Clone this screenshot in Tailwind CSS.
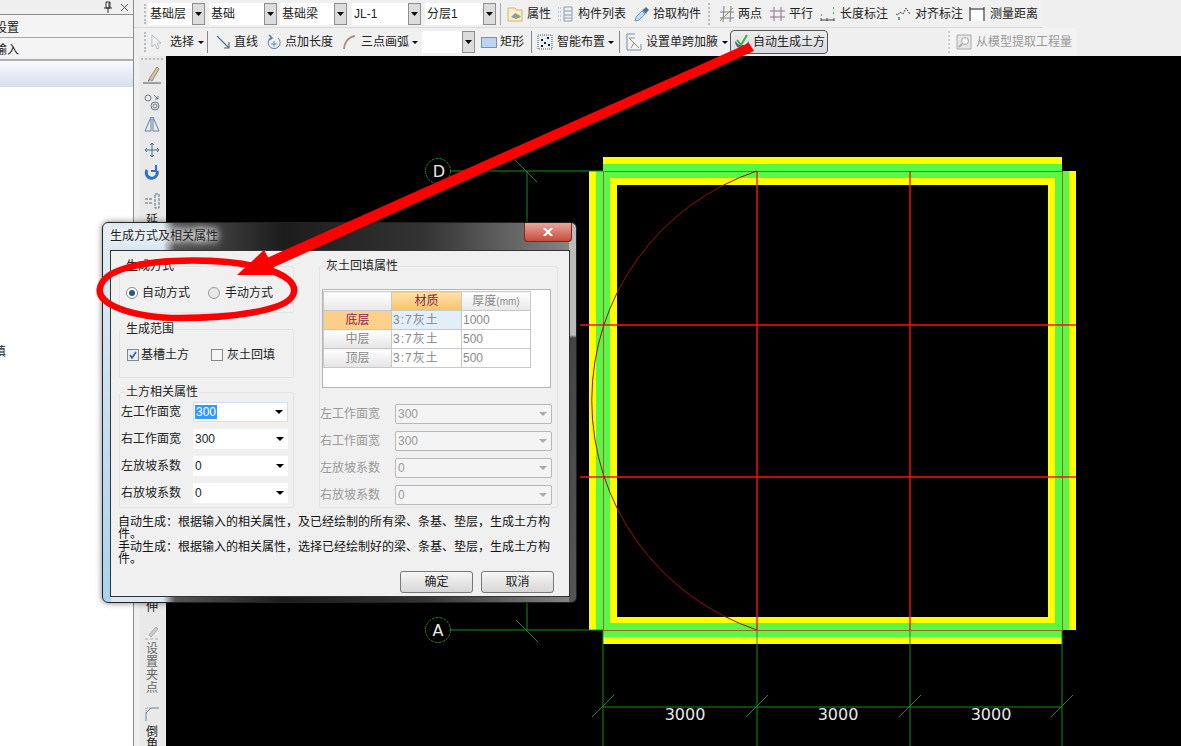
<!DOCTYPE html>
<html lang="zh-CN">
<head>
  <meta charset="UTF-8">
  <title>自动生成土方</title>
  <script src="https://cdn.jsdelivr.net/npm/@tailwindcss/browser@4"></script>
</head>
<body class="bg-[#efefef]">
<div class="relative flex w-[1181px] h-[746px] overflow-hidden bg-[#efefef] text-[12px] leading-[16px] text-[#222] font-['Liberation_Sans','Noto_Sans_CJK_SC',sans-serif]">

  <!-- left panel -->
  <aside class="flex flex-col w-[134px] h-full shrink-0 bg-white border-r border-[#8c8c8c]">
    <div class="flex items-center h-[15px] bg-[#efefef] border-b border-[#8c8c8c]">
      <svg class="ml-[103px] w-[10px] h-[12px]" viewBox="0 0 10 12" fill="none" stroke="#333"><path d="M3 1h4v6H3zM1 7h8M5 7v5M6 1v6"/></svg>
      <svg class="ml-[7px] w-[9px] h-[9px]" viewBox="0 0 9 9" fill="none" stroke="#555"><path d="M1 1l7 7M8 1L1 8"/></svg>
    </div>
    <div class="flex items-center h-[23px] pt-[3px] bg-[#f4f4f4] border-b border-[#a8a8a8]"><span class="-ml-[5px]">设置</span></div>
    <div class="flex items-center h-[23px] pt-[2px] bg-[#f4f4f4] border-b-2 border-[#b0b0b0]"><span class="-ml-[5px]">输入</span></div>
    <div class="h-[26px] bg-gradient-to-b from-[#fafbfd] to-[#d5deeb]"></div>
    <div class="mt-[257px] -ml-[6px]">填</div>
  </aside>

  <main class="flex flex-col flex-1 min-w-0">
    <!-- toolbars -->
    <div class="h-[56px] shrink-0">
      <div class="flex items-center w-[909px] h-[28px] pl-[6px] border-b border-[#dadada]">
        <div class="flex items-center w-[903px] h-full bg-[#f0f0f0]">
          <span class="ml-[4px] w-[2px] h-[20px] border-l-2 border-dotted border-[#bbb]"></span>
          <div class="flex ml-[2px] w-[57px] h-[22px] bg-white"><span class="flex-1 pl-[2px] leading-[22px]">基础层</span><span class="flex items-center justify-center w-[13px] border border-[#8e8e8e] bg-[#dcdcdc]"><svg class="w-[7px] h-[4px]" viewBox="0 0 7 4"><path d="M0 0h7L3.5 4z"/></svg></span></div>
          <div class="flex ml-[4px] w-[68px] h-[22px] bg-white"><span class="flex-1 pl-[2px] leading-[22px]">基础</span><span class="flex items-center justify-center w-[13px] border border-[#8e8e8e] bg-[#dcdcdc]"><svg class="w-[7px] h-[4px]" viewBox="0 0 7 4"><path d="M0 0h7L3.5 4z"/></svg></span></div>
          <div class="flex ml-[3px] w-[67px] h-[22px] bg-white"><span class="flex-1 pl-[2px] leading-[22px]">基础梁</span><span class="flex items-center justify-center w-[13px] border border-[#8e8e8e] bg-[#dcdcdc]"><svg class="w-[7px] h-[4px]" viewBox="0 0 7 4"><path d="M0 0h7L3.5 4z"/></svg></span></div>
          <div class="flex ml-[5px] w-[69px] h-[22px] bg-white"><span class="flex-1 pl-[2px] leading-[22px]">JL-1</span><span class="flex items-center justify-center w-[13px] border border-[#8e8e8e] bg-[#dcdcdc]"><svg class="w-[7px] h-[4px]" viewBox="0 0 7 4"><path d="M0 0h7L3.5 4z"/></svg></span></div>
          <div class="flex ml-[4px] w-[71px] h-[22px] bg-white"><span class="flex-1 pl-[2px] leading-[22px]">分层1</span><span class="flex items-center justify-center w-[13px] border border-[#8e8e8e] bg-[#dcdcdc]"><svg class="w-[7px] h-[4px]" viewBox="0 0 7 4"><path d="M0 0h7L3.5 4z"/></svg></span></div>
          <span class="ml-[4px] w-px h-[22px] bg-[#aaa]"></span>
          <svg class="ml-[6px] w-4 h-4 shrink-0" viewBox="0 0 16 16"><path d="M1 2h7l1 2h6v11H1z" fill="#fbeecb" stroke="#d9b26a"/><path d="M4 11l4-4 4 2 2 2-5 2z" fill="#8fa08a"/></svg>
          <span class="ml-[4px] whitespace-nowrap">属性</span>
          <svg class="ml-[6px] w-4 h-4 shrink-0" viewBox="0 0 16 16" fill="none" stroke="#8aa0b8"><path d="M1 2h3M1 6h3M1 10h3M1 14h3" stroke-dasharray="1 1"/><path d="M7 1h8v14H7zM7 5h8M7 9h8M7 12h8" /></svg>
          <span class="ml-[5px] whitespace-nowrap">构件列表</span>
          <svg class="ml-[8px] w-4 h-4 shrink-0" viewBox="0 0 16 16"><path d="M1 15l1-4 6-6 3 3-6 6z" fill="#c4dcf2" stroke="#6d94bd"/><path d="M8 4l2-1 2-2 3 3-2 2-1 2z" fill="#4f6f92"/></svg>
          <span class="ml-[3px] whitespace-nowrap">拾取构件</span>
          <span class="ml-[7px] w-[2px] h-[22px] border-l-2 border-dotted border-[#bbb]"></span>
          <svg class="ml-[9px] w-[15px] h-4 shrink-0" viewBox="0 0 15 16" fill="none" stroke="#7d7f8c"><path d="M1 6h14M1 12h14M5 0l-1 16M12 0l-1 16"/><path d="M1 15L14 2" stroke="#9a9a50"/></svg>
          <span class="ml-[4px] whitespace-nowrap">两点</span>
          <svg class="ml-[8px] w-[15px] h-4 shrink-0" viewBox="0 0 15 16" fill="none" stroke="#8a7390"><path d="M0 5h15M0 11h15M4 1v14M11 1v14"/></svg>
          <span class="ml-[4px] whitespace-nowrap">平行</span>
          <svg class="ml-[7px] w-[15px] h-4 shrink-0" viewBox="0 0 15 16" fill="none" stroke="#444"><path d="M1 12v3M7 12v3M14 12v3M1 14h13" /><path d="M1 9h2M13 2h2M13 7h2" stroke="#6aa06a" stroke-width="2" stroke-dasharray="1 1"/></svg>
          <span class="ml-[5px] whitespace-nowrap">长度标注</span>
          <svg class="ml-[7px] w-4 h-4 shrink-0" viewBox="0 0 16 16" fill="none" stroke="#444"><path d="M1 8l2 1 2-3 3 2 3-6 4 6" stroke-dasharray="2 1"/><path d="M4 11v3" stroke="#6aa06a" stroke-width="2"/></svg>
          <span class="ml-[4px] whitespace-nowrap">对齐标注</span>
          <svg class="ml-[6px] w-4 h-4 shrink-0" viewBox="0 0 16 16" fill="none"><path d="M2 4h12v11H2z" fill="#fff"/><path d="M1 1v14M15 1v14M1 3h14" stroke="#222"/></svg>
          <span class="ml-[5px] whitespace-nowrap">测量距离</span>
        </div>
      </div>

      <div class="flex items-center h-[28px] pl-[6px]">
        <div class="flex items-center w-[690px] h-full bg-[#f0f0f0]">
          <span class="ml-[4px] w-[2px] h-[20px] border-l-2 border-dotted border-[#bbb]"></span>
          <svg class="ml-[4px] w-3 h-4 shrink-0" viewBox="0 0 12 16"><path d="M2 1v12l3-3 2 5 2-1-2-5h4z" fill="#fff" stroke="#aeb6bf"/></svg>
          <span class="ml-[8px] whitespace-nowrap">选择</span>
          <svg class="ml-[4px] w-[6px] h-[3px] shrink-0" viewBox="0 0 6 3"><path d="M0 0h6L3 3z"/></svg>
          <span class="ml-[3px] w-px h-[22px] bg-[#888]"></span>
          <svg class="ml-[8px] w-[14px] h-[14px] shrink-0" viewBox="0 0 14 14" fill="none" stroke="#55708c" stroke-width="1.2"><path d="M1 1l12 12M13 7v6H8"/></svg>
          <span class="ml-[4px] whitespace-nowrap">直线</span>
          <svg class="ml-[8px] w-4 h-4 shrink-0" viewBox="0 0 16 16" fill="none" stroke="#5f7fa8"><path d="M6 3a6 6 0 1 0 6 1"/><path d="M8 7v6M5 10h6"/><path d="M3 1l3 3-3 2" stroke-width="1.6"/></svg>
          <span class="ml-[3px] whitespace-nowrap">点加长度</span>
          <svg class="ml-[9px] w-[14px] h-4 shrink-0" viewBox="0 0 14 16" fill="none" stroke="#a89088" stroke-width="1.8"><path d="M2 15C2 9 6 3 13 2"/></svg>
          <span class="ml-[5px] whitespace-nowrap">三点画弧</span>
          <svg class="ml-[3px] w-[6px] h-[3px] shrink-0" viewBox="0 0 6 3"><path d="M0 0h6L3 3z"/></svg>
          <div class="flex ml-[4px] w-[53px] h-[22px] bg-white"><span class="flex-1"></span><span class="flex items-center justify-center w-[13px] border border-[#8e8e8e] bg-[#dcdcdc]"><svg class="w-[7px] h-[4px]" viewBox="0 0 7 4"><path d="M0 0h7L3.5 4z"/></svg></span></div>
          <span class="ml-[6px] w-4 h-[11px] shrink-0 bg-[#bcd3f2] border border-[#6f93c4]"></span>
          <span class="ml-[3px] whitespace-nowrap">矩形</span>
          <span class="ml-[7px] w-px h-[22px] bg-[#888]"></span>
          <svg class="ml-[5px] w-4 h-4 shrink-0" viewBox="0 0 16 16" fill="none" stroke="#555"><path d="M1 1h14v14H1z" stroke-dasharray="1 1" fill="#e6eef6"/><path d="M4 6h2M10 4h2M7 9h2M4 12h2M11 11h2" stroke="#222" stroke-width="2"/></svg>
          <span class="ml-[4px] whitespace-nowrap">智能布置</span>
          <svg class="ml-[3px] w-[6px] h-[3px] shrink-0" viewBox="0 0 6 3"><path d="M0 0h6L3 3z"/></svg>
          <span class="ml-[5px] w-px h-[22px] bg-[#888]"></span>
          <svg class="ml-[6px] w-4 h-[18px] shrink-0" viewBox="0 0 16 18" fill="none" stroke="#6f8fb0"><path d="M9 1H1v16h14v-6" fill="#eef4fa"/><path d="M3 5l10 10M3 5h6M8 10l-3 5" stroke="#a98a60"/></svg>
          <span class="ml-[4px] whitespace-nowrap">设置单跨加腋</span>
          <svg class="ml-[4px] w-[6px] h-[3px] shrink-0" viewBox="0 0 6 3"><path d="M0 0h6L3 3z"/></svg>
          <div class="flex items-center ml-[2px] w-[98px] h-[24px] rounded-[4px] border border-[#555] bg-gradient-to-b from-[#ececec] to-[#d9dbe0]">
            <svg class="ml-[4px] w-[14px] h-4 shrink-0" viewBox="0 0 14 16" fill="none"><path d="M0 7c0 10 14 10 14 0l-4 4H4z" fill="#5c5f8e"/><path d="M2 6l4 5 6-10" stroke="#3fb035" stroke-width="2"/></svg>
            <span class="ml-[4px] whitespace-nowrap">自动生成土方</span>
          </div>
        </div>
        <div class="flex items-center ml-[117px] w-[130px] h-full bg-[#f3f3f3] text-[#999]">
          <span class="ml-[1px] w-[2px] h-[22px] border-l-2 border-dotted border-[#ccc]"></span>
          <svg class="ml-[6px] w-4 h-4 shrink-0" viewBox="0 0 16 16" fill="none" stroke="#aaa"><path d="M1 1h14v14H1z" fill="#e6e6e6"/><circle cx="9" cy="7" r="3.5" fill="#f4f4f4"/><path d="M6 10l-3 3" stroke-width="2"/></svg>
          <span class="ml-[4px] whitespace-nowrap">从模型提取工程量</span>
        </div>
      </div>
    </div>

    <div class="flex flex-1 min-h-0">
      <!-- vertical toolbar -->
      <div class="flex flex-col items-center w-[26px] ml-[5px] shrink-0 bg-[#e9e9e9] text-center">
        <span class="mt-[2px] w-[22px] border-t-2 border-dotted border-[#bbb]"></span>
        <svg class="mt-[5px] w-5 h-5 shrink-0" viewBox="0 0 20 20" fill="none"><path d="M7 14l8-12 2 2-7 12z" fill="#d8c690" stroke="#8a8a8a"/><path d="M6 15l3-1-3 3z" fill="#777"/><path d="M1 18h18" stroke="#555"/></svg>
        <span class="mt-[4px] w-[20px] h-px bg-[#999]"></span>
        <svg class="mt-[4px] w-4 h-[18px] shrink-0" viewBox="0 0 16 18" fill="none" stroke="#6a7a88"><circle cx="4" cy="5" r="3"/><circle cx="11" cy="13" r="4"/><circle cx="11" cy="13" r="2"/><path d="M10 2l4 4M14 3v3h-3"/></svg>
        <svg class="mt-[5px] w-4 h-4 shrink-0" viewBox="0 0 16 16" fill="none" stroke="#6283b0"><path d="M7 1v14H1zM9 1v14h6z"/></svg>
        <span class="mt-[4px] w-[20px] h-px bg-[#999]"></span>
        <svg class="mt-[6px] w-4 h-4 shrink-0" viewBox="0 0 16 16" fill="none" stroke="#3f6f8a"><path d="M8 1v14M1 8h14M6 3l2-2 2 2M6 13l2 2 2-2M3 6L1 8l2 2M13 6l2 2-2 2"/></svg>
        <svg class="mt-[6px] w-4 h-4 shrink-0" viewBox="0 0 16 16" fill="none" stroke="#2f73c0" stroke-width="3"><path d="M3 6a5.5 5.5 0 1 0 10 1"/><path d="M12 1v6H7" stroke-width="2"/></svg>
        <span class="mt-[7px] w-[20px] h-px bg-[#999]"></span>
        <svg class="mt-[6px] w-4 h-4 shrink-0" viewBox="0 0 16 16" fill="none" stroke="#55708c"><path d="M11 1h4v14h-4zM1 6h8M1 10h8" stroke-dasharray="3 1"/></svg>
        <span class="mt-[5px] leading-[12px]">延</span>
        <span class="mt-[375px] leading-[12px]">伸</span>
        <span class="mt-[7px] w-[20px] h-px bg-[#999]"></span>
        <svg class="mt-[5px] w-4 h-4 shrink-0" viewBox="0 0 16 16" fill="none" stroke="#aaa"><path d="M5 10l7-8 2 2-7 8z" fill="#ccc"/><path d="M1 14h14" stroke-dasharray="3 2"/></svg>
        <span class="mt-[2px] leading-[13px] text-[#666]">设<br>置<br>夹<br>点</span>
        <span class="mt-[5px] w-[20px] h-px bg-[#999]"></span>
        <svg class="mt-[6px] w-4 h-4 shrink-0" viewBox="0 0 16 16" fill="none" stroke="#6283b0"><path d="M2 15V7l5-5h8"/><path d="M2 7V2h5" stroke-dasharray="1 1" stroke="#888"/></svg>
        <span class="mt-[4px] leading-[12px]">倒<br>角</span>
      </div>

      <!-- drawing canvas -->
      <div class="relative flex-1 bg-black ml-px">
        <svg class="absolute left-0 top-0" width="1015" height="690" viewBox="166 56 1015 690" fill="none">
          <path d="M603 157h459v14h14v459h-14v14H603v-14h-14V171h14z" fill="#ffff00"/>
          <path d="M603 164h459v7h7v459h-7v7H603v-7h-7V171h7z" fill="#58f848"/>
          <rect x="610" y="178" width="445" height="445" fill="#ffff00"/>
          <rect x="617" y="185" width="431" height="432" fill="#000"/>
          <g stroke="#1f8a1f">
            <path d="M450 171h153M450 630h153M527 171v459M515 160l22 22M516 620l22 22"/>
            <path d="M603 630v116M757 630v116M910 630v116M1062 630v116M603 707h459"/>
            <path d="M592 717l22-22M746 717l22-22M899 717l22-22M1051 717l22-22"/>
            <circle cx="438" cy="171" r="12.5" stroke-dasharray="3 1"/>
            <circle cx="438" cy="630" r="12.5" stroke-dasharray="3 1"/>
          </g>
          <rect x="603.5" y="171.5" width="459" height="459" stroke="#a8601c"/>
          <path d="M757 171v459M910 171v459M580 325h496M580 477h496" stroke="#ff1010" stroke-width="1.4"/>
          <path d="M757 171A242 242 0 0 0 757 630" stroke="#a00c0c"/>
          <g fill="#e8e8e8" font-size="16" font-family="DejaVu Sans" text-anchor="middle">
            <text x="439" y="177">D</text>
            <text x="438" y="636">A</text>
            <text x="685" y="720">3000</text>
            <text x="838" y="720">3000</text>
            <text x="991" y="720">3000</text>
          </g>
        </svg>
      </div>
    </div>
  </main>

  <!-- dialog -->
  <div class="absolute left-[102px] top-[222px] flex flex-col w-[475px] h-[381px] rounded-[6px] border border-[#222] [background:linear-gradient(to_bottom,#e4edf4,#a8d2f0)_left/8px_100%_no-repeat,linear-gradient(to_bottom,#bbb,#bbb_112px,#444_115px,#555)_right/7px_100%_no-repeat,linear-gradient(to_right,#dbe8f2_0,#dbe8f2_60px,#555_72px,#1c1c1c_180px,#333_320px,#888_100%)] shadow-[0_0_6px_rgba(0,0,0,0.5)]">
    <div class="flex items-center h-[27px] shrink-0 pl-[7px] pb-[2px]"><span class="[text-shadow:0_0_6px_#fff,0_0_8px_#fff,0_0_10px_#fff]">生成方式及相关属性</span></div>
    <div class="absolute right-[4px] top-0 flex items-center justify-center w-[48px] h-[19px] rounded-b-[4px] border border-t-0 border-[#7a2a22] bg-gradient-to-b from-[#e9a79b] to-[#c6493a]">
      <svg class="w-[10px] h-[8px]" viewBox="0 0 10 8" stroke="#fff" stroke-width="2.2"><path d="M1 0l8 8M9 0L1 8"/></svg>
    </div>
    <div class="mx-[7px] w-[460px] h-[347px] border border-[#333] bg-[#f0f0f0] pt-[7px]">
      <div class="flex h-[251px] pl-[8px]">
        <div class="flex flex-col w-[175px]">
          <fieldset class="h-[55px] border border-[#e4e4e4] rounded-[2px]">
            <legend class="ml-[6px] leading-[16px]">生成方式</legend>
            <div class="flex items-center pt-[11px] pl-[6px]">
              <span class="flex items-center justify-center w-3 h-3 rounded-full border border-[#888] bg-white"><span class="w-[6px] h-[6px] rounded-full bg-[#1d5d86]"></span></span>
              <span class="ml-[4px]">自动方式</span>
              <span class="ml-[18px] w-3 h-3 rounded-full border border-[#999] bg-[#e8e8e8]"></span>
              <span class="ml-[5px]">手动方式</span>
            </div>
          </fieldset>
          <fieldset class="mt-[8px] h-[57px] border border-[#e4e4e4] rounded-[2px]">
            <legend class="ml-[6px] leading-[16px]">生成范围</legend>
            <div class="flex items-center pt-[10px] pl-[7px]">
              <span class="flex items-center justify-center w-3 h-3 border border-[#888] bg-[#e3edf7]"><svg class="w-[8px] h-[8px]" viewBox="0 0 8 8" fill="none" stroke="#3b5f86" stroke-width="1.6"><path d="M1 4l2 3 4-6"/></svg></span>
              <span class="ml-[2px]">基槽土方</span>
              <span class="ml-[22px] w-3 h-3 border border-[#888] bg-[#f6f6f6]"></span>
              <span class="ml-[4px]">灰土回填</span>
            </div>
          </fieldset>
          <fieldset class="mt-[6px] h-[124px] border border-[#e4e4e4] rounded-[2px]">
            <legend class="ml-[6px] leading-[16px]">土方相关属性</legend>
            <div class="flex flex-col gap-[7px] pt-[2px] pl-px">
              <div class="flex items-center h-[20px]"><span class="w-[60px] whitespace-nowrap">左工作面宽</span><div class="flex items-center ml-[12px] w-[95px] h-[20px] bg-white border border-[#cfe0ee]"><span class="ml-[1px] px-px leading-[14px] bg-[#3399ff] text-white">300</span><svg class="ml-auto mr-[4px] w-[8px] h-[4px]" viewBox="0 0 8 4"><path d="M0 0h8L4 4z"/></svg></div></div>
              <div class="flex items-center h-[20px]"><span class="w-[60px] whitespace-nowrap">右工作面宽</span><div class="flex items-center ml-[12px] w-[95px] h-[20px] bg-white"><span class="ml-[2px]">300</span><svg class="ml-auto mr-[4px] w-[8px] h-[4px]" viewBox="0 0 8 4"><path d="M0 0h8L4 4z"/></svg></div></div>
              <div class="flex items-center h-[20px]"><span class="w-[60px] whitespace-nowrap">左放坡系数</span><div class="flex items-center ml-[12px] w-[95px] h-[20px] bg-white"><span class="ml-[2px]">0</span><svg class="ml-auto mr-[4px] w-[8px] h-[4px]" viewBox="0 0 8 4"><path d="M0 0h8L4 4z"/></svg></div></div>
              <div class="flex items-center h-[20px]"><span class="w-[60px] whitespace-nowrap">右放坡系数</span><div class="flex items-center ml-[12px] w-[95px] h-[20px] bg-white"><span class="ml-[2px]">0</span><svg class="ml-auto mr-[4px] w-[8px] h-[4px]" viewBox="0 0 8 4"><path d="M0 0h8L4 4z"/></svg></div></div>
            </div>
          </fieldset>
        </div>

        <fieldset class="ml-[25px] w-[239px] h-[250px] border border-[#e4e4e4] rounded-[2px]">
          <legend class="ml-[6px] leading-[16px]">灰土回填属性</legend>
          <div class="mt-[15px] ml-[2px] w-[229px] h-[99px] border border-[#b4b4b4] bg-white pt-px">
            <table class="table-fixed w-[207px] border-collapse text-[#888]">
              <colgroup><col class="w-[68px]"><col class="w-[70px]"><col class="w-[69px]"></colgroup>
              <tr class="h-[19px]">
                <td class="border border-[#c8c8c8] bg-gradient-to-b from-white to-[#e8e8e8]"></td>
                <td class="text-center text-[#8b2252] border border-[#c8c8c8] bg-gradient-to-b from-[#fde2a8] to-[#f8c268]">材质</td>
                <td class="text-center border border-[#c8c8c8] bg-gradient-to-b from-white to-[#e8e8e8] whitespace-nowrap">厚度<span class="text-[10px]">(mm)</span></td>
              </tr>
              <tr class="h-[19px]">
                <td class="text-center text-[#8b2252] border border-[#c8c8c8] bg-[#fbd088]">底层</td>
                <td class="pl-px border border-[#c8c8c8] bg-[#e2eefa] tracking-[1px]">3:7灰土</td>
                <td class="pl-px border border-[#c8c8c8]">1000</td>
              </tr>
              <tr class="h-[19px]">
                <td class="text-center border border-[#c8c8c8] bg-gradient-to-b from-white to-[#e4e4e4]">中层</td>
                <td class="pl-px border border-[#c8c8c8] tracking-[1px]">3:7灰土</td>
                <td class="pl-px border border-[#c8c8c8]">500</td>
              </tr>
              <tr class="h-[19px]">
                <td class="text-center border border-[#c8c8c8] bg-gradient-to-b from-white to-[#e4e4e4]">顶层</td>
                <td class="pl-px border border-[#c8c8c8] tracking-[1px]">3:7灰土</td>
                <td class="pl-px border border-[#c8c8c8]">500</td>
              </tr>
            </table>
          </div>
          <div class="flex flex-col gap-[7px] mt-[16px] text-[#999]">
            <div class="flex items-center h-[20px]"><span class="w-[60px] whitespace-nowrap">左工作面宽</span><div class="flex items-center ml-[15px] w-[157px] h-[20px] bg-[#f4f4f4] border border-[#b8b8b8] rounded-[2px]"><span class="ml-[2px]">300</span><svg class="ml-auto mr-[4px] w-[8px] h-[4px]" viewBox="0 0 8 4" fill="#aaa"><path d="M0 0h8L4 4z"/></svg></div></div>
            <div class="flex items-center h-[20px]"><span class="w-[60px] whitespace-nowrap">右工作面宽</span><div class="flex items-center ml-[15px] w-[157px] h-[20px] bg-[#f4f4f4] border border-[#b8b8b8] rounded-[2px]"><span class="ml-[2px]">300</span><svg class="ml-auto mr-[4px] w-[8px] h-[4px]" viewBox="0 0 8 4" fill="#aaa"><path d="M0 0h8L4 4z"/></svg></div></div>
            <div class="flex items-center h-[20px]"><span class="w-[60px] whitespace-nowrap">左放坡系数</span><div class="flex items-center ml-[15px] w-[157px] h-[20px] bg-[#f4f4f4] border border-[#b8b8b8] rounded-[2px]"><span class="ml-[2px]">0</span><svg class="ml-auto mr-[4px] w-[8px] h-[4px]" viewBox="0 0 8 4" fill="#aaa"><path d="M0 0h8L4 4z"/></svg></div></div>
            <div class="flex items-center h-[20px]"><span class="w-[60px] whitespace-nowrap">右放坡系数</span><div class="flex items-center ml-[15px] w-[157px] h-[20px] bg-[#f4f4f4] border border-[#b8b8b8] rounded-[2px]"><span class="ml-[2px]">0</span><svg class="ml-auto mr-[4px] w-[8px] h-[4px]" viewBox="0 0 8 4" fill="#aaa"><path d="M0 0h8L4 4z"/></svg></div></div>
          </div>
        </fieldset>
      </div>

      <div class="ml-[7px] mt-[7px] w-[440px] leading-[12px] text-[#111]">
        <p>自动生成：根据输入的相关属性，及已经绘制的所有梁、条基、垫层，生成土方构件。</p>
        <p class="mt-px">手动生成：根据输入的相关属性，选择已经绘制好的梁、条基、垫层，生成土方构件。</p>
      </div>
      <div class="flex justify-end gap-[8px] mt-[6px] pr-[15px]">
        <button class="w-[73px] h-[22px] rounded-[3px] border border-[#777] bg-gradient-to-b from-[#f6f6f6] to-[#d6d6d6]">确定</button>
        <button class="w-[73px] h-[22px] rounded-[3px] border border-[#777] bg-gradient-to-b from-[#f6f6f6] to-[#d6d6d6]">取消</button>
      </div>
    </div>
  </div>

  <!-- red annotation over everything -->
  <svg class="absolute left-0 top-0 pointer-events-none" width="1181" height="746" viewBox="0 0 1181 746" fill="none">
    <path d="M749 43l5 8L263 272l-5-10z" fill="#ff0000"/>
    <path d="M237 275l27-25 14 25z" fill="#ff0000"/>
    <path d="M126 268C160 258 226 258 262 268C286 274 298 284 293 295C286 311 230 318 180 318C132 318 96 304 100 288C102 278 112 272 126 268z" stroke="#ff0000" stroke-width="6.5"/>
  </svg>
</div>
</body>
</html>
